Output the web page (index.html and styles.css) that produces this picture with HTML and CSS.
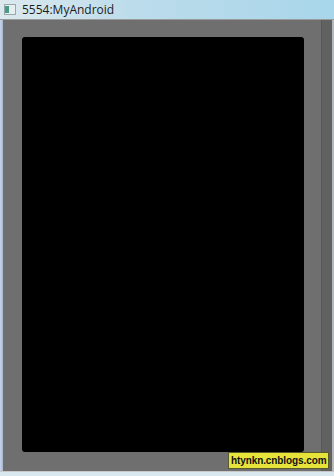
FILE: index.html
```html
<!DOCTYPE html>
<html lang="en">
<head>
    <meta charset="UTF-8">
    <title>5554:MyAndroid</title>
    <link rel="stylesheet" href="styles.css">
</head>
<body>
    <div class="window">
        <div class="titlebar">
            <span class="app-icon"><span class="icon-inner"></span></span>
            <span class="title">5554:MyAndroid</span>
        </div>
        <div class="frame">
            <div class="left-edge"></div>
            <div class="body">
                <div class="screen"></div>
            </div>
            <div class="right-rail"></div>
            <div class="right-edge"></div>
        </div>
    </div>
    <div class="watermark">htynkn.cnblogs.com</div>
</body>
</html>
```

FILE: styles.css
```css
body {
    margin: 0;
    width: 334px;
    height: 476px;
    overflow: hidden;
    font-family: 'Open Sans', 'DejaVu Sans', sans-serif;
    background: #d8e8ee;
    position: relative;
}

.window {
    display: flex;
    flex-direction: column;
    height: 476px;
}

.titlebar {
    height: 19px;
    display: flex;
    align-items: center;
    gap: 4px;
    padding-left: 4px;
    background: linear-gradient(90deg, #dce9ee 0%, #bcdceb 40%, #a8d6ea 100%);
}

.app-icon {
    width: 10px;
    height: 9px;
    background: #e6eef0;
    border: 1px solid #9aa8ae;
    display: flex;
    align-items: center;
}
.icon-inner {
    width: 4px;
    height: 7px;
    background: #4a9a8a;
}

.title {
    font-size: 12px;
    color: #1c1c1c;
    margin-left: 2px;
}

.frame {
    flex: 1;
    display: flex;
    border-top: 1px solid #9a9a9a;
    border-bottom: 1px solid #c8c8c8;
    margin-bottom: 4px;
}

.left-edge {
    width: 3px;
    background: linear-gradient(90deg, #c8d4ea, #a8b6d0);
}

.body {
    flex: 1;
    background: #6f6f6f;
    padding: 17px 17px 19px 19px;
    display: flex;
}

.screen {
    flex: 1;
    background: #000;
    border-radius: 3px;
}

.right-rail {
    width: 10px;
    background: #616161;
    border-left: 1px solid #585858;
}

.right-edge {
    width: 2px;
    background: #b4b8bc;
}

.watermark {
    position: absolute;
    left: 228px;
    top: 452px;
    padding: 0 2px;
    height: 15px;
    line-height: 15px;
    background: #e6e33a;
    border: 1px solid #5a5a2a;
    color: #111;
    font-family: 'Liberation Sans', Arial, sans-serif;
    font-weight: bold;
    font-size: 10px;
    letter-spacing: -0.1px;
}
```
